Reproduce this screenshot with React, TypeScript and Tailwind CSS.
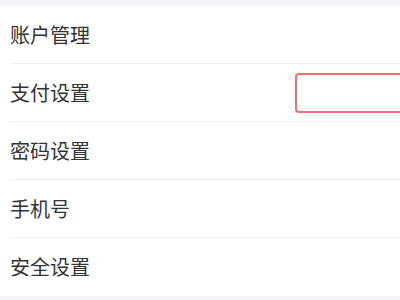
import React from "react";

const rows = ["账户管理", "支付设置", "密码设置", "手机号", "安全设置"];

export default function App() {
  return (
    <div
      className="w-[400px] h-[300px] overflow-hidden bg-[#f4f5f8] flex flex-col"
      style={{ fontFamily: '"Noto Sans CJK SC", "Noto Sans", sans-serif' }}
    >
      <div className="h-[6px] shrink-0" />
      <div className="bg-white flex flex-col">
        {rows.map((r, i) => (
          <div
            key={r}
            className={`h-[58px] pl-[10px] flex items-center ${i < rows.length - 1 ? "" : ""}`}
          >
            <div
              className={`h-full flex-1 flex items-center justify-between ${
                i < rows.length - 1 ? "border-b border-[#efeff2]" : ""
              }`}
            >
              <span className="text-[20px] leading-none text-[#333]">{r}</span>
              {i === 1 && (
                <div className="w-[120px] h-[40px] border-2 border-[#f56c6c] rounded-[4px] -mr-[15px] bg-white" />
              )}
            </div>
          </div>
        ))}
      </div>
    </div>
  );
}
